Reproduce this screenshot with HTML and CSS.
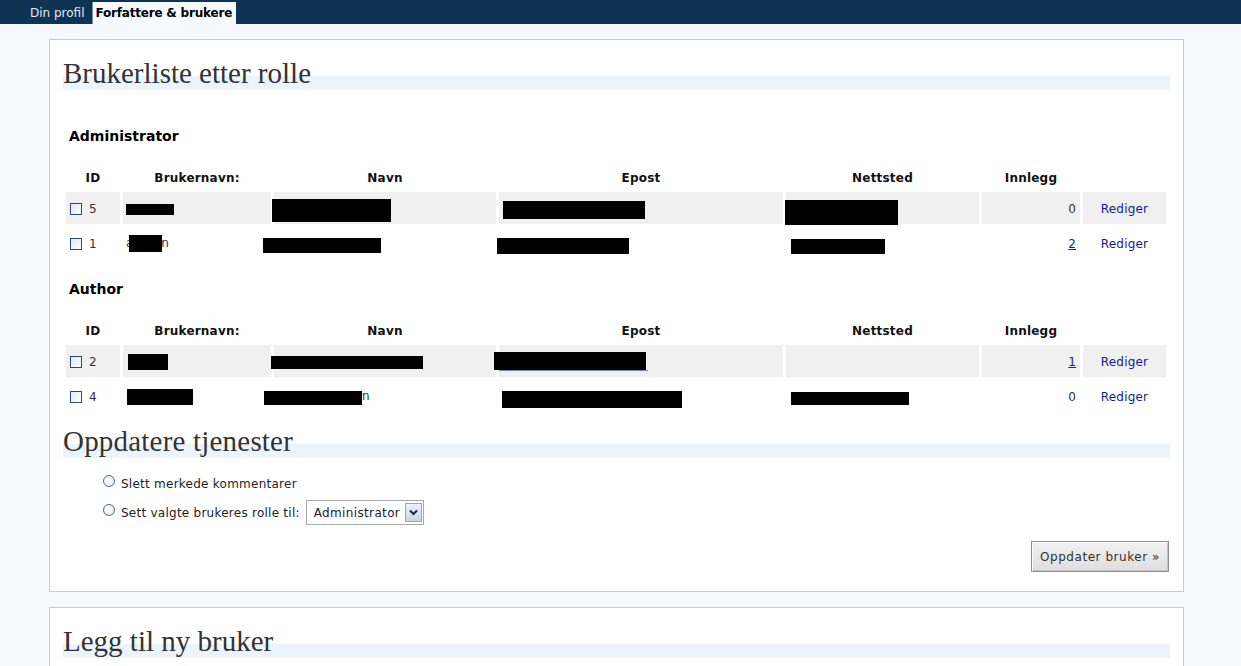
FILE: index.html
```html
<!DOCTYPE html>
<html lang="no">
<head>
<meta charset="utf-8">
<title>Forfattere &amp; brukere</title>
<link rel="stylesheet" href="styles.css">
</head>
<body>
<nav class="topbar">
  <a class="tab" href="#">Din profil</a>
  <a class="tab active" href="#">Forfattere &amp; brukere</a>
</nav>
<main class="wrap">
  <section class="panel">
    <h2>Brukerliste etter rolle</h2>
    <h3 class="role">Administrator</h3>
    <table class="users">
      <colgroup>
        <col class="c-id"><col class="c-user"><col class="c-name"><col class="c-mail"><col class="c-site"><col class="c-posts"><col class="c-edit">
      </colgroup>
      <thead>
        <tr><th>ID</th><th>Brukernavn:</th><th>Navn</th><th>Epost</th><th>Nettsted</th><th>Innlegg</th><th></th></tr>
      </thead>
      <tbody>
        <tr class="alt">
          <td><span class="cb"></span>5</td>
          <td><span class="bk a1"></span></td>
          <td><span class="bk a2"></span></td>
          <td><span class="bk a3"></span></td>
          <td><span class="bk a4"></span></td>
          <td class="num">0</td>
          <td class="edit"><a href="#">Rediger</a></td>
        </tr>
        <tr>
          <td><span class="cb"></span>1</td>
          <td>a<span class="bk b1"></span>n</td>
          <td><span class="bk b2"></span></td>
          <td><span class="bk b3"></span></td>
          <td><span class="bk b4"></span></td>
          <td class="num"><a class="ulink" href="#">2</a></td>
          <td class="edit"><a href="#">Rediger</a></td>
        </tr>
      </tbody>
    </table>
    <h3 class="role">Author</h3>
    <table class="users">
      <colgroup>
        <col class="c-id"><col class="c-user"><col class="c-name"><col class="c-mail"><col class="c-site"><col class="c-posts"><col class="c-edit">
      </colgroup>
      <thead>
        <tr><th>ID</th><th>Brukernavn:</th><th>Navn</th><th>Epost</th><th>Nettsted</th><th>Innlegg</th><th></th></tr>
      </thead>
      <tbody>
        <tr class="alt">
          <td><span class="cb"></span>2</td>
          <td><span class="bk c1"></span></td>
          <td><span class="bk c2"></span></td>
          <td><span class="bk c3 mail"></span></td>
          <td></td>
          <td class="num"><a class="ulink" href="#">1</a></td>
          <td class="edit"><a href="#">Rediger</a></td>
        </tr>
        <tr>
          <td><span class="cb"></span>4</td>
          <td><span class="bk d1"></span></td>
          <td><span class="bk d2"></span>n</td>
          <td><span class="bk d3"></span></td>
          <td><span class="bk d4"></span></td>
          <td class="num">0</td>
          <td class="edit"><a href="#">Rediger</a></td>
        </tr>
      </tbody>
    </table>
    <h2 class="h2-next">Oppdatere tjenester</h2>
    <ul class="actions">
      <li><span class="radio"></span>Slett merkede kommentarer</li>
      <li><span class="radio"></span>Sett valgte brukeres rolle til:
        <span class="select"><span class="sel-text">Administrator</span><span class="sel-btn"><svg width="9" height="7" viewBox="0 0 9 7"><path d="M1 1.5 L4.5 5 L8 1.5" fill="none" stroke="#1a2a44" stroke-width="2"/></svg></span></span>
      </li>
    </ul>
    <div class="submit-row"><button class="btn" type="button">Oppdater bruker »</button></div>
  </section>
  <section class="panel">
    <h2>Legg til ny bruker</h2>
  </section>
</main>
</body>
</html>
```
FILE: styles.css
```css
* { box-sizing: border-box; }
html, body { margin: 0; padding: 0; }
body {
  background: #f6faff;
  font-family: "DejaVu Sans", Verdana, sans-serif;
  font-size: 12px;
  color: #333;
  overflow: hidden;
}
.topbar {
  background: #0f3352;
  height: 24px;
  display: flex;
  align-items: flex-end;
  padding-left: 25px;
  gap: 2px;
}
.tab {
  color: #e2e8ee;
  text-decoration: none;
  font-size: 12px;
  height: 22px;
  line-height: 22px;
  padding: 0 5px;
}
.tab.active {
  background: #f6faff;
  color: #000;
  font-weight: bold;
  padding: 0 4px 0 3px;
  letter-spacing: -0.2px;
  border-left: 1px solid #6e8fae;
}
.wrap {
  padding: 15px 57px 0 49px;
}
.panel {
  background: #fff;
  border: 1px solid #ccc;
  padding: 15px 13px 19px;
  display: flex;
  flex-direction: column;
  margin-bottom: 15px;
}
h2 {
  font-family: "Liberation Serif", "Times New Roman", serif;
  font-weight: normal;
  font-size: 29px;
  color: #333;
  height: 35px;
  line-height: 36px;
  margin: 0 0 19px;
  padding: 0;
  background: linear-gradient(to bottom, transparent 0, transparent 21px, #ebf4fb 21px, #ebf4fb 35px);
  white-space: nowrap;
}
.h2-next { margin-top: 8px; margin-bottom: 0; letter-spacing: 0.2px; }
h3.role {
  font-size: 14px;
  font-weight: bold;
  color: #000;
  margin: 19px 0 19px 6px;
  line-height: 17px;
}
.users {
  width: 1106px;
  table-layout: fixed;
  border-collapse: separate;
  border-spacing: 3px;
  margin: 0;
}
.c-id { width: 54px; }
.c-user { width: 148px; }
.c-name { width: 222px; }
.c-mail { width: 284px; }
.c-site { width: 193px; }
.c-posts { width: 98px; }
.c-edit { width: 83px; }
.users th {
  height: 22px;
  font-weight: bold;
  color: #111;
  font-size: 12px;
  text-align: center;
  padding: 0;
  letter-spacing: 0.2px;
}
.users td {
  height: 32px;
  padding: 1px 3px 0;
  white-space: nowrap;
  overflow: visible;
  vertical-align: middle;
}
.users tr.alt td { background: #f0f0f0; }
.users td.num { text-align: right; padding-right: 4px; }
.users td.edit { text-align: center; }
.edit a { color: #1a1a8c; text-decoration: none; letter-spacing: 0.2px; }
.ulink { color: #1a1a8c; text-decoration: underline; }
.cb {
  display: inline-block;
  width: 12px;
  height: 12px;
  border: 1px solid #2a4a6e;
  background: linear-gradient(135deg, #e4e8ee, #ffffff);
  vertical-align: -2px;
  margin: 0 7px 0 1px;
}
.bk {
  display: inline-block;
  background: #000;
  vertical-align: middle;
  position: relative;
}
.a1 { width: 48px; height: 11px; margin-left: 0; top: 0; }
.a2 { width: 119px; height: 23px; margin-left: -5px; top: 2px; }
.a3 { width: 142px; height: 18px; margin-left: 1px; top: 1px; }
.a4 { width: 113px; height: 25px; margin-left: -4px; top: 4px; }
.b1 { width: 33px; height: 17px; margin-left: -4px; margin-right: -1px; top: 0; }
.b2 { width: 118px; height: 15px; margin-left: -14px; top: 2px; }
.b3 { width: 132px; height: 16px; margin-left: -5px; top: 2px; }
.b4 { width: 94px; height: 15px; margin-left: 2px; top: 3px; }
.c1 { width: 40px; height: 16px; margin-left: 2px; top: 0; }
.c2 { width: 152px; height: 13px; margin-left: -6px; top: 0; }
.c3 { width: 152px; height: 18px; margin-left: -8px; top: -1px; }
.mail::after {
  content: "";
  position: absolute;
  left: 5px;
  right: -2px;
  bottom: -1px;
  height: 1px;
  background: #6f88c0;
}
.d1 { width: 66px; height: 16px; margin-left: 1px; top: 0; }
.d2 { width: 98px; height: 14px; margin-left: -13px; top: 1px; }
.d3 { width: 180px; height: 17px; margin-left: 0; top: 3px; }
.d4 { width: 118px; height: 13px; margin-left: 2px; top: 1px; }
.actions {
  list-style: none;
  margin: 16px 0 0;
  padding: 0 0 0 40px;
  display: flex;
  flex-direction: column;
  gap: 6px;
  letter-spacing: 0.25px;
}
.actions li {
  display: flex;
  align-items: center;
  min-height: 20px;
  color: #222;
}
.radio {
  display: inline-block;
  width: 12px;
  height: 12px;
  border-radius: 50%;
  border: 1px solid #4d6a8c;
  background: radial-gradient(circle at 35% 35%, #ffffff, #dfe4ea);
  margin-right: 6px;
  position: relative;
  top: -3px;
}
.select {
  display: inline-flex;
  align-items: center;
  margin-left: 6px;
  width: 118px;
  height: 25px;
  border: 1px solid #a7a9ac;
  background: #fff;
  padding: 0 1px 0 7px;
  font-size: 12px;
  color: #222;
  letter-spacing: 0.35px;
}
.sel-text { flex: 1; }
.sel-btn {
  width: 17px;
  height: 19px;
  border: 1px solid #9aa6b6;
  background: linear-gradient(#eef2f8, #c9d3e1);
  display: flex;
  align-items: center;
  justify-content: center;
}
.submit-row {
  display: flex;
  justify-content: flex-end;
  margin-top: 16px;
}
.btn {
  font-family: "DejaVu Sans", Verdana, sans-serif;
  font-size: 12px;
  color: #333;
  letter-spacing: 0.55px;
  width: 138px;
  height: 31px;
  background: linear-gradient(#f2f2f2, #dedede);
  border: 1px solid #8f8f8f;
  box-shadow: inset 1px 1px 0 #fff, inset -1px -1px 0 #c4c4c4;
  padding: 0;
  margin-right: 1px;
}
```
